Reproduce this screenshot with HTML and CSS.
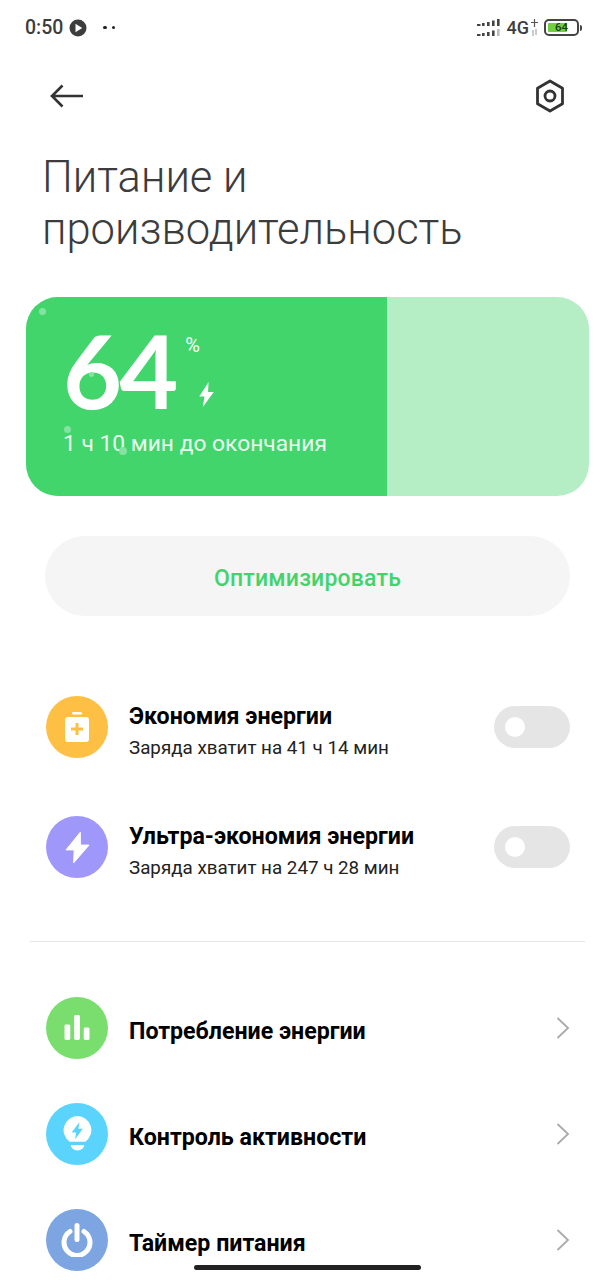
FILE: index.html
```html
<!DOCTYPE html>
<html lang="ru">
<head>
<meta charset="utf-8">
<title>Питание и производительность</title>
<link rel="stylesheet" href="styles.css">
</head>
<body>
<div class="screen">
  <header class="status">
    <div class="status-left">
      <span class="time">0:50</span>
      <svg class="play" viewBox="0 0 18 18"><circle cx="9" cy="9" r="8.5" fill="#3d3d3d"/><path d="M6.500 4.800 13.200 9l-6.700 4.200z" fill="#fff"/></svg>
      <span class="dots"><i></i><i></i></span>
    </div>
    <div class="status-right">
      <svg class="signal" viewBox="0 0 23 18"><g fill="#444"><rect x="0" y="5" width="3.500" height="2"/><rect x="5" y="4" width="2.600" height="3"/><rect x="10" y="3" width="2.600" height="4"/><rect x="15" y="1.500" width="2.600" height="5.500"/><rect x="20" y="0" width="2.600" height="7"/><rect x="0" y="15" width="3.500" height="2"/><rect x="5" y="14" width="2.600" height="3"/><rect x="10" y="13" width="2.600" height="4"/><rect x="15" y="11.500" width="2.600" height="5.500"/></g><rect x="20" y="10" width="2.600" height="7" fill="#bbb"/></svg>
      <span class="net">4G</span>
      <svg class="plus" viewBox="0 0 9 18"><path d="M4.500 0v8M1 3.500h7" stroke="#555" stroke-width="1.200" fill="none"/><path d="M3 11v6M6 10v6" stroke="#aaa" stroke-width="1.200" fill="none"/></svg>
      <div class="battery"><div class="battery-body"><div class="battery-fill"></div><span class="battery-num">64</span></div><div class="battery-cap"></div></div>
    </div>
  </header>

  <nav class="nav">
    <svg class="back" viewBox="0 0 34 24"><path d="M33 12H2M12.500 1.500 2 12l10.500 10.500" fill="none" stroke="#333" stroke-width="2.600"/></svg>
    <svg class="gear" viewBox="0 0 30 34"><path d="M15 2 27.500 9.300v15.400L15 32 2.500 24.700V9.300z" fill="none" stroke="#333" stroke-width="2.800" stroke-linejoin="round"/><circle cx="15" cy="17" r="5" fill="none" stroke="#333" stroke-width="2.800"/></svg>
  </nav>

  <h1 class="title">Питание и<br>производительность</h1>

  <section class="card">
    <div class="card-fill">
      <div class="level">
        <span class="level-num">64</span>
        <div class="level-side">
          <span class="pct">%</span>
          <svg class="bolt" viewBox="0 0 16 24"><path d="M10 0 1 14h5l-1.500 10L15 9.500H9.500z" fill="#fff"/></svg>
        </div>
      </div>
      <p class="remain">1 ч 10 мин до окончания</p>
    </div>
    <i class="bubble b1"></i><i class="bubble b2"></i><i class="bubble b3"></i><i class="bubble b4"></i>
  </section>

  <button class="optimize">Оптимизировать</button>

  <section class="modes">
    <div class="row">
      <div class="ico yellow"><svg viewBox="0 0 24 30"><rect x="7" y="0" width="10" height="2.500" rx="1.200" fill="#fff"/><rect x="0" y="5" width="24" height="25" rx="3" fill="#fff"/><path d="M12 11v12M6 17h12" stroke="#fdc044" stroke-width="3" fill="none"/></svg></div>
      <div class="text"><div class="name">Экономия энергии</div><div class="sub">Заряда хватит на 41 ч 14 мин</div></div>
      <div class="toggle"><i></i></div>
    </div>
    <div class="row">
      <div class="ico purple"><svg viewBox="0 0 26 32"><path d="M16 0 1 18.500h8.500L9 32l16-18.500h-9z" fill="#fff" stroke="#fff" stroke-linejoin="round"/></svg></div>
      <div class="text"><div class="name">Ультра-экономия энергии</div><div class="sub">Заряда хватит на 247 ч 28 мин</div></div>
      <div class="toggle"><i></i></div>
    </div>
  </section>

  <hr class="divider">

  <section class="links">
    <div class="row link">
      <div class="ico green"><svg viewBox="0 0 26 26"><rect x="0" y="10" width="6" height="16" rx="1.500" fill="#fff"/><rect x="10" y="0" width="6" height="26" rx="1.500" fill="#fff"/><rect x="20" y="13" width="6" height="13" rx="1.500" fill="#fff"/></svg></div>
      <div class="name">Потребление энергии</div>
      <svg class="chev" viewBox="0 0 14 22"><path d="M1.500 1 12 11 1.500 21" fill="none" stroke="#aaa" stroke-width="1.800"/></svg>
    </div>
    <div class="row link">
      <div class="ico sky"><svg viewBox="0 0 30 36"><path d="M15 0a14.500 14.500 0 0 1 8 26.500H7A14.500 14.500 0 0 1 15 0z" fill="#fff"/><path d="M8 30h14a7 5.500 0 0 1-14 0z" fill="#fff"/><path d="M17 6 9 17h4.500L12.500 24l8-11H16z" fill="#5ad4fd"/></svg></div>
      <div class="name">Контроль активности</div>
      <svg class="chev" viewBox="0 0 14 22"><path d="M1.500 1 12 11 1.500 21" fill="none" stroke="#aaa" stroke-width="1.800"/></svg>
    </div>
    <div class="row link">
      <div class="ico blue"><svg viewBox="0 0 32 34"><path d="M9 8.500a13 13 0 1 0 14 0" fill="none" stroke="#fff" stroke-width="5" stroke-linecap="round"/><path d="M16 2.500v14" stroke="#fff" stroke-width="5" stroke-linecap="round"/></svg></div>
      <div class="name">Таймер питания</div>
      <svg class="chev" viewBox="0 0 14 22"><path d="M1.500 1 12 11 1.500 21" fill="none" stroke="#aaa" stroke-width="1.800"/></svg>
    </div>
  </section>

  <div class="home"></div>
</div>
</body>
</html>
```
FILE: styles.css
```css
* { box-sizing: border-box; }
html, body { margin: 0; padding: 0; background: #fff; }
.screen { position: relative; width: 615px; height: 1280px; overflow: hidden; font-family: Roboto, "Noto Sans", sans-serif; color: #000; }

.status { height: 56px; display: flex; justify-content: space-between; align-items: center; padding: 0 25px 1px 25px; color: #3d3d3d; }
.status-left, .status-right { display: flex; align-items: center; }
.time { font-size: 19.500px; font-weight: 500; }
.play { width: 18px; height: 18px; margin-left: 6px; }
.dots { display: flex; gap: 5px; margin-left: 16px; }
.dots i { width: 3.500px; height: 3.500px; border-radius: 50%; background: #222; }
.status-right { margin-right: 8px; }
.signal { width: 23px; height: 18px; }
.net { font-size: 18px; font-weight: 500; margin-left: 7px; }
.plus { width: 9px; height: 18px; margin-left: 1px; }
.battery { display: flex; align-items: center; margin-left: 5px; }
.battery-body { position: relative; width: 35px; height: 17px; border: 2px solid #444; border-radius: 5px; padding: 2px; }
.battery-fill { width: 19px; height: 100%; background: #6fcf3f; border-radius: 1px; }
.battery-num { position: absolute; inset: 0; text-align: center; font-size: 11.500px; line-height: 13px; font-weight: 500; color: #1c3d12; }
.battery-cap { width: 2px; height: 6px; background: #444; margin-left: 1px; border-radius: 0 2px 2px 0; }

.nav { height: 80px; display: flex; justify-content: space-between; align-items: center; padding: 0 50px 0 50px; }
.back { width: 34px; height: 24px; }
.gear { width: 30px; height: 34px; }

.title { margin: 16px 0 0 42px; font-size: 43.500px; line-height: 52px; font-weight: 300; color: #3c3c3c; letter-spacing: 0; }

.card { position: relative; margin: 41px 26px 0 26px; height: 199px; border-radius: 32px; background: #b5eec5; overflow: hidden; }
.card-fill { width: 361px; height: 100%; background: #42d56b; padding: 30px 0 0 37px; color: #fff; }
.level { display: flex; height: 88px; }
.level-num { font-family: Lato, Roboto, sans-serif; font-size: 102px; line-height: 86px; font-weight: 700; letter-spacing: -3px; }
.level-side { display: flex; flex-direction: column; margin-left: 10px; }
.pct { font-size: 20px; line-height: 20px; font-weight: 400; margin-top: 8px; }
.bolt { width: 17px; height: 25px; margin-top: 27px; margin-left: 13px; }
.remain { margin: 15px 0 0 0; font-size: 22.800px; line-height: 28px; color: #eafbef; }
.bubble { position: absolute; border-radius: 50%; background: #84e3a0; }
.b1 { left: 13px; top: 10.500px; width: 7px; height: 7px; }
.b2 { left: 63px; top: 74.500px; width: 5px; height: 5px; }
.b3 { left: 38px; top: 128.500px; width: 7px; height: 7px; }
.b4 { left: 93px; top: 150px; width: 8px; height: 8px; }

.optimize { display: block; width: 525px; height: 80px; margin: 40px 0 0 45px; padding: 4px 0 0 0; border: 0; border-radius: 40px; background: #f5f5f5; color: #43d36d; font-family: Roboto, sans-serif; font-size: 23px; font-weight: 500; letter-spacing: .2px; }

.modes { margin-top: 80px; display: flex; flex-direction: column; gap: 57.500px; }
.row { display: flex; align-items: center; height: 62.500px; padding: 0 45px 0 46px; }
.ico { width: 62px; height: 62px; border-radius: 50%; flex: none; display: flex; align-items: center; justify-content: center; margin-right: 21px; }
.yellow { background: #fdc044; }
.yellow svg { width: 24px; height: 30px; }
.purple { background: #a097fb; }
.purple svg { width: 25px; height: 31px; }
.green { background: #79de6d; }
.green svg { width: 26px; height: 25px; }
.sky { background: #5ad4fd; }
.sky svg { width: 29px; height: 35px; }
.blue { background: #7ca5e2; }
.blue svg { width: 32px; height: 34px; }
.text { flex: 1; padding-top: 6px; }
.name { font-size: 23.200px; line-height: 30px; font-weight: 700; flex: 1; }
.link .name { padding-top: 6px; }
.sub { font-size: 18.800px; line-height: 24px; margin-top: 5px; color: #222; }
.toggle { width: 76px; height: 42px; border-radius: 21px; background: #e5e5e5; display: flex; align-items: center; padding-left: 11px; }
.toggle i { width: 20px; height: 20px; border-radius: 50%; background: #fff; }

.divider { margin: 62px 30px 0 30px; border: 0; border-top: 1px solid #e6e6e6; }

.links { margin-top: 55px; display: flex; flex-direction: column; gap: 43.500px; }
.chev { width: 14px; height: 22px; flex: none; }

.home { position: absolute; left: 194px; top: 1265px; width: 227px; height: 5px; border-radius: 3px; background: #222; }
```
